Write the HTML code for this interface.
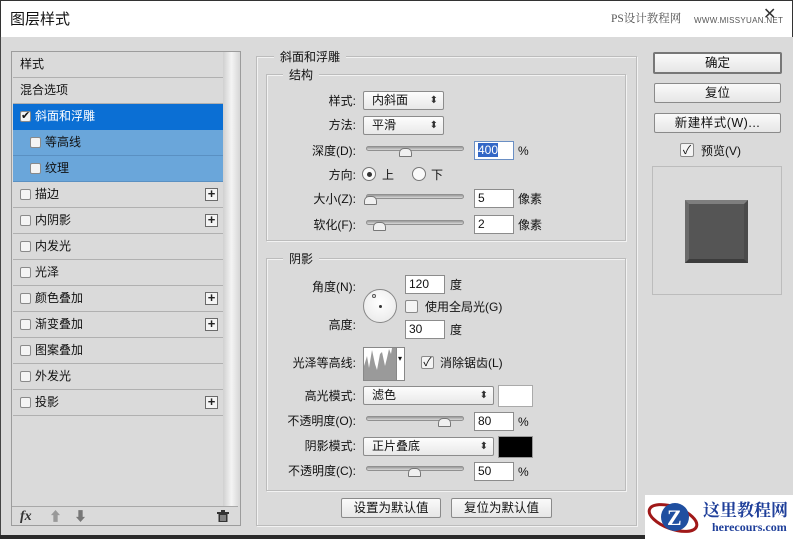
<!DOCTYPE html><html><head><meta charset="utf-8"><style>
*{box-sizing:border-box;margin:0;padding:0}
body{width:793px;height:539px;overflow:hidden;background:#dadada;font-family:"Liberation Sans","Noto Sans CJK SC",sans-serif;font-size:12px;line-height:14px;color:#111;position:relative}
.a{position:absolute;white-space:nowrap}
.title{left:0;top:0;width:793px;height:37px;background:#fff;border:1px solid #333;border-bottom:none}
.row{position:absolute;left:13px;width:210px;height:26px;border-bottom:1px solid #b0b0b0;line-height:25px}
.cb{position:absolute;width:11px;height:11px;background:#f4f4f4;border:1px solid #8a8a8a;border-radius:2px}
.plus{position:absolute;left:192px;top:6px;width:13px;height:13px;border:1px solid #6a6a6a;background:#f4f4f4;font:bold 13px/10px "Liberation Sans";text-align:center;color:#222}
.grp{position:absolute;border:1px solid #bcbcbc;box-shadow:1px 1px 0 #f2f2f2, inset 1px 1px 0 #f2f2f2}
.lg{position:absolute;background:#dadada;padding:0 6px}
.lbl{position:absolute;text-align:right;width:120px;line-height:14px}
.dd{position:absolute;height:19px;border:1px solid #8c8c8c;border-radius:2px;background:linear-gradient(#fdfdfd,#e8e8e8);line-height:17px;padding-left:8px}
.dd:after{content:"⬍";position:absolute;right:5px;top:0;font-size:10px;color:#333}
.in{position:absolute;width:40px;height:19px;background:#fff;border:1px solid #8c8c8c;line-height:17px;padding-left:3px}
.tr{position:absolute;width:98px;height:5px;border-radius:3px;background:linear-gradient(#9a9a9a,#d8d8d8);border:1px solid #909090}
.th{position:absolute;width:0;height:0}
.th:before{content:"";position:absolute;left:-6px;top:0;width:11px;height:7px;background:#f0f0f0;border:1px solid #777;border-radius:5px 5px 1px 1px}
.btn{position:absolute;height:20px;border:1px solid #8a8a8a;border-radius:2px;background:linear-gradient(#fafafa,#e6e6e6);text-align:center;line-height:18px;font-size:12.5px}
</style></head><body>
<div class="a title"></div>
<div class="a" style="left:10px;top:11px;font-size:15px;line-height:17px">图层样式</div>
<div class="a" style="left:611px;top:12px;font-size:11.5px;color:#555;font-family:'Liberation Serif','Noto Serif CJK SC',serif">PS设计教程网</div>
<div class="a" style="left:694px;top:14px;font-size:8px;color:#555;letter-spacing:.3px">WWW.MISSYUAN.NET</div>
<div class="a" style="left:763px;top:8px;font-size:16px;color:#333">✕</div>
<div class="a" style="left:0;top:37px;width:1px;height:502px;background:#444"></div>
<div class="a" style="left:0;top:535px;width:645px;height:4px;background:#2a2a2a"></div>

<div class="a" style="left:11px;top:51px;width:230px;height:475px;border:1px solid #9c9c9c;background:#dadada"></div>
<div class="a" style="left:223px;top:52px;width:17px;height:455px;background:linear-gradient(90deg,#d0d0d0,#f4f4f4 50%,#d6d6d6)"></div>
<div class="row" style="top:52px"><span class="a" style="left:7px;line-height:25px">样式</span></div>
<div class="row" style="top:78px"><span class="a" style="left:7px;line-height:25px">混合选项</span></div>
<div class="row" style="top:104px;background:#0b6fd4;color:#fff;border-color:#0b6fd4"><div class="cb" style="left:7px;top:7px;font-size:11px;line-height:9px;color:#111;text-align:center">✔</div><span class="a" style="left:22px;line-height:25px">斜面和浮雕</span></div>
<div class="row" style="top:130px;background:#6aa6da;border-color:#5a90c2"><div class="cb" style="left:17px;top:7px"></div><span class="a" style="left:32px;line-height:25px">等高线</span></div>
<div class="row" style="top:156px;background:#6aa6da;border-color:#5a90c2"><div class="cb" style="left:17px;top:7px"></div><span class="a" style="left:32px;line-height:25px">纹理</span></div>
<div class="row" style="top:182px"><div class="cb" style="left:7px;top:7px"></div><span class="a" style="left:22px;line-height:25px">描边</span><div class="plus">+</div></div>
<div class="row" style="top:208px"><div class="cb" style="left:7px;top:7px"></div><span class="a" style="left:22px;line-height:25px">内阴影</span><div class="plus">+</div></div>
<div class="row" style="top:234px"><div class="cb" style="left:7px;top:7px"></div><span class="a" style="left:22px;line-height:25px">内发光</span></div>
<div class="row" style="top:260px"><div class="cb" style="left:7px;top:7px"></div><span class="a" style="left:22px;line-height:25px">光泽</span></div>
<div class="row" style="top:286px"><div class="cb" style="left:7px;top:7px"></div><span class="a" style="left:22px;line-height:25px">颜色叠加</span><div class="plus">+</div></div>
<div class="row" style="top:312px"><div class="cb" style="left:7px;top:7px"></div><span class="a" style="left:22px;line-height:25px">渐变叠加</span><div class="plus">+</div></div>
<div class="row" style="top:338px"><div class="cb" style="left:7px;top:7px"></div><span class="a" style="left:22px;line-height:25px">图案叠加</span></div>
<div class="row" style="top:364px"><div class="cb" style="left:7px;top:7px"></div><span class="a" style="left:22px;line-height:25px">外发光</span></div>
<div class="row" style="top:390px"><div class="cb" style="left:7px;top:7px"></div><span class="a" style="left:22px;line-height:25px">投影</span><div class="plus">+</div></div>
<div class="a" style="left:12px;top:506px;width:226px;height:1px;background:#a8a8a8"></div>
<div class="a" style="left:20px;top:509px;font:italic bold 14px 'Liberation Serif',serif;color:#333">fx</div>
<div class="a" style="left:49px;top:510px;color:#999;font-size:13px">⬆</div>
<div class="a" style="left:74px;top:510px;color:#777;font-size:13px">⬇</div>
<svg class="a" style="left:217px;top:510px" width="12" height="12"><rect x="0" y="2" width="12" height="2" fill="#333"/><rect x="4" y="0" width="4" height="2" fill="#333"/><rect x="1.5" y="4" width="9" height="8" fill="#333"/><path d="M4 5v6M6 5v6M8 5v6" stroke="#ccc"/></svg>

<div class="grp" style="left:256px;top:56px;width:381px;height:470px"></div>
<div class="lg" style="left:274px;top:50px">斜面和浮雕</div>
<div class="grp" style="left:266px;top:74px;width:360px;height:167px"></div>
<div class="lg" style="left:283px;top:68px">结构</div>
<div class="lbl" style="left:236px;top:94px">样式:</div><div class="dd" style="left:363px;top:91px;width:81px">内斜面</div>
<div class="lbl" style="left:236px;top:118px">方法:</div><div class="dd" style="left:363px;top:116px;width:81px">平滑</div>
<div class="lbl" style="left:236px;top:144px">深度(D):</div><div class="tr" style="left:366px;top:146px"></div><div class="th" style="left:405px;top:148px"></div>
<div class="in" style="left:474px;top:141px;border-color:#6a8fc4"><span style="background:#3367c6;color:#fff">400</span></div><div class="a" style="left:518px;top:144px">%</div>
<div class="lbl" style="left:236px;top:168px">方向:</div>
<div class="a" style="left:362px;top:167px;width:14px;height:14px;border:1px solid #777;border-radius:50%;background:#fafafa"></div><div class="a" style="left:367px;top:172px;width:5px;height:5px;border-radius:50%;background:#333"></div><div class="a" style="left:382px;top:168px">上</div>
<div class="a" style="left:412px;top:167px;width:14px;height:14px;border:1px solid #777;border-radius:50%;background:#fafafa"></div><div class="a" style="left:431px;top:168px">下</div>
<div class="lbl" style="left:236px;top:192px">大小(Z):</div><div class="tr" style="left:366px;top:194px"></div><div class="th" style="left:370px;top:196px"></div>
<div class="in" style="left:474px;top:189px">5</div><div class="a" style="left:518px;top:192px">像素</div>
<div class="lbl" style="left:236px;top:218px">软化(F):</div><div class="tr" style="left:366px;top:220px"></div><div class="th" style="left:379px;top:222px"></div>
<div class="in" style="left:474px;top:215px">2</div><div class="a" style="left:518px;top:218px">像素</div>

<div class="grp" style="left:266px;top:258px;width:360px;height:233px"></div>
<div class="lg" style="left:283px;top:252px">阴影</div>
<div class="lbl" style="left:236px;top:280px">角度(N):</div>
<div class="a" style="left:363px;top:289px;width:34px;height:34px;border:1px solid #888;border-radius:50%;background:radial-gradient(circle at 50% 40%,#fff,#e6e6e6)"></div>
<div class="a" style="left:372px;top:294px;width:4px;height:4px;border:1px solid #555;border-radius:50%"></div>
<div class="a" style="left:379px;top:305px;width:3px;height:3px;background:#333;border-radius:50%"></div>
<div class="in" style="left:405px;top:275px">120</div><div class="a" style="left:450px;top:278px">度</div>
<div class="cb" style="left:405px;top:300px;width:13px;height:13px"></div><div class="a" style="left:425px;top:300px">使用全局光(G)</div>
<div class="lbl" style="left:236px;top:318px">高度:</div>
<div class="in" style="left:405px;top:320px">30</div><div class="a" style="left:450px;top:323px">度</div>
<div class="lbl" style="left:236px;top:356px">光泽等高线:</div>
<div class="a" style="left:363px;top:347px;width:42px;height:34px;border:1px solid #888;background:#fff"></div>
<svg class="a" style="left:364px;top:348px" width="32" height="32"><path d="M0 32L0 18L3 8L5 20L8 2L11 16L13 22L16 6L18 4L21 18L23 10L25 1L27 6L28 0L32 0L32 32Z" fill="#9a9a9a"/></svg>
<div class="a" style="left:396px;top:348px;width:1px;height:32px;background:#888"></div><div class="a" style="left:398px;top:352px;font-size:8px">▾</div>
<div class="cb" style="left:421px;top:356px;width:13px;height:13px;font-size:12px;line-height:11px;text-align:center">✓</div><div class="a" style="left:440px;top:356px">消除锯齿(L)</div>
<div class="lbl" style="left:236px;top:389px">高光模式:</div><div class="dd" style="left:363px;top:386px;width:131px">滤色</div>
<div class="a" style="left:498px;top:385px;width:35px;height:22px;background:#fff;border:1px solid #aaa"></div>
<div class="lbl" style="left:236px;top:414px">不透明度(O):</div><div class="tr" style="left:366px;top:416px"></div><div class="th" style="left:444px;top:418px"></div>
<div class="in" style="left:474px;top:412px">80</div><div class="a" style="left:518px;top:415px">%</div>
<div class="lbl" style="left:236px;top:439px">阴影模式:</div><div class="dd" style="left:363px;top:437px;width:131px">正片叠底</div>
<div class="a" style="left:498px;top:436px;width:35px;height:22px;background:#000;border:1px solid #999"></div>
<div class="lbl" style="left:236px;top:464px">不透明度(C):</div><div class="tr" style="left:366px;top:466px"></div><div class="th" style="left:414px;top:468px"></div>
<div class="in" style="left:474px;top:462px">50</div><div class="a" style="left:518px;top:465px">%</div>
<div class="btn" style="left:341px;top:498px;width:100px">设置为默认值</div>
<div class="btn" style="left:451px;top:498px;width:101px">复位为默认值</div>

<div class="btn" style="left:653px;top:52px;width:129px;height:22px;border:2px solid #777;line-height:18px">确定</div>
<div class="btn" style="left:654px;top:83px;width:127px">复位</div>
<div class="btn" style="left:654px;top:113px;width:127px;letter-spacing:.5px">新建样式(W)...</div>
<div class="cb" style="left:680px;top:143px;width:14px;height:14px;font-size:12px;line-height:12px;text-align:center">✓</div><div class="a" style="left:701px;top:144px">预览(V)</div>
<div class="a" style="left:652px;top:166px;width:130px;height:129px;border:1px solid #bcbcbc"></div>
<div class="a" style="left:685px;top:200px;width:63px;height:63px;background:#555;border-top:4px solid #7e7e7e;border-left:4px solid #6a6a6a;border-right:4px solid #4a4a4a;border-bottom:4px solid #3c3c3c"></div>

<div class="a" style="left:645px;top:495px;width:148px;height:44px;background:#fff"></div>
<svg class="a" style="left:646px;top:496px" width="55" height="42"><ellipse cx="27" cy="22" rx="25" ry="11" fill="none" stroke="#a01818" stroke-width="3" transform="rotate(20 27 22)"/><circle cx="29" cy="21" r="14" fill="#1f4fa0"/><text x="21" y="29" font-family="Liberation Serif" font-weight="bold" font-size="22" fill="#fff">Z</text></svg>
<div class="a" style="left:703px;top:499px;font:bold 17px/20px 'Noto Serif CJK SC',serif;color:#1f3f9a">这里教程网</div>
<div class="a" style="left:712px;top:520px;font:bold 12px 'Liberation Serif',serif;color:#1f3f9a">herecours.com</div>
</body></html>
